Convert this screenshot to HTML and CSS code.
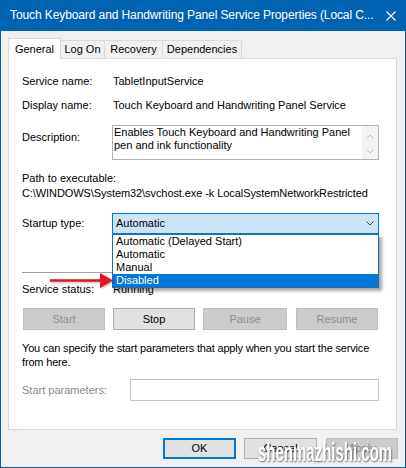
FILE: index.html
```html
<html>
    <head>
        <link rel="stylesheet" href="styles.css">
    </head>
    <body>
        <div class="window">
            <div class="titlebar">
                <span class="title">Touch Keyboard and Handwriting Panel Service Properties (Local C...</span>
                <svg class="close" width="10" height="10" viewBox="0 0 10 10">
                    <path d="M0.5 0.5 L9.5 9.5 M9.5 0.5 L0.5 9.5" stroke="#fff" stroke-width="1.1" fill="none"/>
                </svg>
            </div>
            <div class="content">
                <div class="tabs">
                    <div class="tab active">General</div>
                    <div class="tab tab-logon">Log On</div>
                    <div class="tab tab-recovery">Recovery</div>
                    <div class="tab tab-deps">Dependencies</div>
                </div>

                <div class="panel">
                    <div class="row">
                        <span class="label">Service name:</span>
                        <span class="value">TabletInputService</span>
                    </div>
                    <div class="row gap-11">
                        <span class="label">Display name:</span>
                        <span class="value">Touch Keyboard and Handwriting Panel Service</span>
                    </div>
                    <div class="row row-top gap-13">
                        <span class="label desc-label">Description:</span>
                        <div class="desc">
                            <div class="desc-text">Enables Touch Keyboard and Handwriting Panel<br>pen and ink functionality</div>
                            <div class="desc-scroll">
                                <svg width="8" height="5" viewBox="0 0 8 5"><path d="M0.5 4.5 L4 1 L7.5 4.5" stroke="#c2c2c2" fill="none"/></svg>
                                <svg width="8" height="5" viewBox="0 0 8 5"><path d="M0.5 0.5 L4 4 L7.5 0.5" stroke="#c2c2c2" fill="none"/></svg>
                            </div>
                        </div>
                    </div>

                    <div class="path-label">Path to executable:</div>
                    <div class="path-value">C:\WINDOWS\System32\svchost.exe -k LocalSystemNetworkRestricted</div>

                    <div class="row gap-13">
                        <span class="label">Startup type:</span>
                        <div class="combo">
                            <span>Automatic</span>
                            <svg class="chev" width="8" height="5" viewBox="0 0 8 5"><path d="M0.5 0.5 L4 4 L7.5 0.5" stroke="#444" fill="none"/></svg>
                            <ul class="dropdown">
                                <li>Automatic (Delayed Start)</li>
                                <li>Automatic</li>
                                <li>Manual</li>
                                <li class="selected">Disabled</li>
                            </ul>
                        </div>
                    </div>

                    <div class="separator"></div>

                    <div class="row gap-10">
                        <span class="label">Service status:</span>
                        <span class="value">Running</span>
                    </div>

                    <div class="service-buttons">
                        <div class="btn disabled btn-start">Start</div>
                        <div class="btn">Stop</div>
                        <div class="btn disabled btn-pause">Pause</div>
                        <div class="btn disabled btn-resume">Resume</div>
                    </div>

                    <p class="hint">You can specify the start parameters that apply when you start the service<br>from here.</p>

                    <div class="row params">
                        <span class="label params-label">Start parameters:</span>
                        <div class="input"></div>
                    </div>

                    <svg class="arrow" width="66" height="17" viewBox="0 0 66 17">
                        <path d="M2 8.5 L54 8.5" stroke="#e3161d" stroke-width="2.5"/>
                        <path d="M52 1 L65 8.5 L52 16 Z" fill="#e3161d"/>
                    </svg>
                </div>

                <div class="footer">
                    <div class="btn btn-ok">OK</div>
                    <div class="btn btn-cancel">Cancel</div>
                    <div class="btn disabled btn-apply">Apply</div>
                </div>
            </div>
            <div class="watermark">shenmazhishi.com</div>
        </div>
    </body>
</html>
```

FILE: styles.css
```css
* { box-sizing: border-box; }

body {
    margin: 0;
    font-family: "Liberation Sans", Arial, sans-serif;
    font-size: 11px;
    line-height: 13px;
    color: #000;
}

.window {
    position: relative;
    width: 406px;
    height: 468px;
    border: 1px solid #0063b1;
    border-top: 0;
    background: #f0f0f0;
    overflow: hidden;
}

/* title bar */
.titlebar {
    height: 31px;
    background: #0063b1;
    color: #fff;
    display: flex;
    align-items: center;
    padding-left: 9px;
    font-size: 12px;
}
.title { flex: 1; white-space: nowrap; letter-spacing: -0.1px; }
.close { margin-right: 9px; flex: none; }

.content { padding: 7px 8px 0 7px; }

/* tabs */
.tabs {
    display: flex;
    align-items: flex-end;
    height: 20px;
}
.tab {
    height: 18px;
    line-height: 17px;
    text-align: center;
    background: #f0f0f0;
    border: 1px solid #d9d9d9;
    border-left: 0;
    border-bottom: 0;
}
.tab.active {
    position: relative;
    z-index: 1;
    width: 53px;
    height: 21px;
    line-height: 20px;
    margin-bottom: -1px;
    background: #fff;
    border-left: 1px solid #d9d9d9;
}
.tab-logon { width: 44px; }
.tab-recovery { width: 58px; }
.tab-deps { width: 79px; }

/* panel */
.panel {
    position: relative;
    height: 372px;
    background: #fff;
    border: 1px solid #d9d9d9;
    padding: 16px 17px 0 13px;
}

.row { display: flex; align-items: center; }
.row-top { align-items: flex-start; }
.gap-10 { margin-top: 10px; }
.gap-11 { margin-top: 11px; }
.gap-13 { margin-top: 13px; }

.label { width: 90px; flex: none; }
.value { padding-left: 1px; white-space: nowrap; }

.desc-label { margin-top: 6px; }
.desc {
    flex: 1;
    height: 35px;
    display: flex;
    border: 1px solid #b4b4b4;
    background: #fff;
}
.desc-text { flex: 1; padding: 0 0 0 1px; }
.desc-scroll {
    width: 16px;
    background: #f4f4f4;
    display: flex;
    flex-direction: column;
    align-items: center;
    justify-content: space-between;
    padding: 8px 0 5px;
}

.path-label { margin-top: 12px; }
.path-value { margin-top: 2px; white-space: nowrap; letter-spacing: -0.08px; }

/* combo box */
.combo {
    position: relative;
    flex: 1;
    height: 21px;
    display: flex;
    align-items: center;
    padding-left: 3px;
    border: 1px solid #0078d7;
    background: #cce4f7;
}
.chev { margin-left: auto; margin-right: 4px; }

.dropdown {
    position: absolute;
    z-index: 2;
    left: -1px;
    top: 20px;
    width: 267px;
    margin: 0;
    padding: 0;
    list-style: none;
    background: #fff;
    border: 1px solid #1f6fb5;
    box-shadow: 3px 3px 3px rgba(0, 0, 0, 0.35);
}
.dropdown li { height: 13px; padding-left: 3px; white-space: nowrap; }
.dropdown li.selected { background: #0078d7; color: #fff; }

.separator {
    height: 1px;
    margin-top: 38px;
    background: #a0a0a0;
}

/* buttons */
.btn {
    height: 22px;
    display: flex;
    align-items: center;
    justify-content: center;
    background: #e1e1e1;
    border: 1px solid #adadad;
}
.btn.disabled {
    background: #cccccc;
    border-color: #bfbfbf;
    color: #8d8d8d;
}

.service-buttons {
    display: flex;
    margin-top: 12px;
}
.service-buttons .btn { width: 82px; margin-left: 8px; }
.service-buttons .btn-start { margin-left: 1px; }
.service-buttons .btn-pause { width: 84px; }
.service-buttons .btn-resume { margin-left: 9px; }

.hint {
    margin: 11px 0 0;
    line-height: 14px;
    white-space: nowrap;
    letter-spacing: -0.17px;
}

.params { margin-top: 10px; }
.params-label { width: 108px; color: #8a8a8a; }
.input {
    flex: 1;
    height: 22px;
    border: 1px solid #c4c4c4;
    background: #fff;
}

.arrow {
    position: absolute;
    z-index: 3;
    left: 39px;
    top: 213px;
    filter: drop-shadow(1px 1px 1px rgba(0, 0, 0, 0.3));
}

/* dialog buttons */
.footer {
    display: flex;
    justify-content: flex-end;
    margin: 8px -1px 0 0;
}
.footer .btn { height: 21px; width: 73px; }
.btn-ok { border: 2px solid #0078d7; }
.btn-cancel { margin-left: 8px; }
.footer .btn-apply { width: 72px; margin-left: 9px; }

.watermark {
    position: absolute;
    left: 257px;
    top: 439px;
    font-size: 25px;
    line-height: 26px;
    font-weight: bold;
    color: #fff;
    white-space: nowrap;
    transform: scaleX(0.6);
    transform-origin: left top;
    text-shadow: 1px 1px 2px rgba(0, 0, 0, 0.55);
}
```
